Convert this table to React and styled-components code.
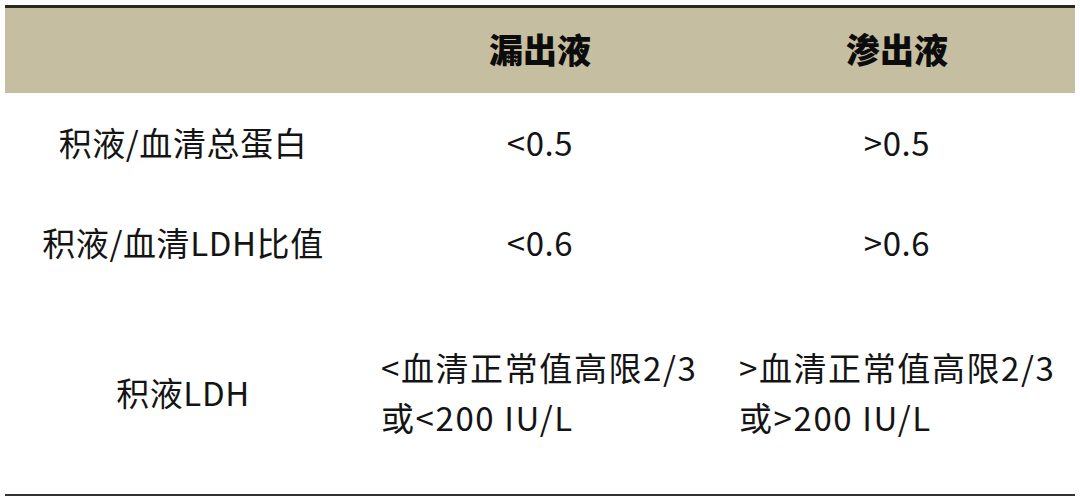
import React from 'react';
import styled, { createGlobalStyle } from 'styled-components';

const Global = createGlobalStyle`
  body {
    margin: 0;
    background: #ffffff;
    font-family: 'Noto Sans CJK SC', 'Noto Sans', sans-serif;
    color: #141414;
  }
`;

const Page = styled.div`
  padding: 5px 5px 0 5px;
`;

const Table = styled.div`
  display: grid;
  grid-template-columns: 356px 358px 356px;
  grid-template-rows: 85px 102px 98px 201px;
  border-top: 3px solid #2a2a1e;
  border-bottom: 2px solid #333333;
`;

const HeadCell = styled.div`
  background: #c6bea0;
  display: flex;
  align-items: center;
  justify-content: center;
  font-size: 34px;
  font-weight: 900;
  color: #0c0c0c;
  padding-bottom: 4px;
`;

const Cell = styled.div`
  display: flex;
  align-items: center;
  justify-content: ${p => (p.left ? 'flex-start' : 'center')};
  padding-left: ${p => (p.left ? '20px' : '0')};
  font-size: 33px;
  font-weight: 400;
  letter-spacing: ${p => (p.left ? '1.6px' : '0.6px')};
  line-height: 50px;
  padding-bottom: 4px;
`;

const Lines = styled.div`
  display: flex;
  flex-direction: column;
`;

const rows = [
  { label: '积液/血清总蛋白', a: ['<0.5'], b: ['>0.5'] },
  { label: '积液/血清LDH比值', a: ['<0.6'], b: ['>0.6'] },
  {
    label: '积液LDH',
    a: ['<血清正常值高限2/3', '或<200 IU/L'],
    b: ['>血清正常值高限2/3', '或>200 IU/L'],
    left: true,
  },
];

export default function App() {
  return (
    <Page>
      <Global />
      <Table>
        <HeadCell />
        <HeadCell>漏出液</HeadCell>
        <HeadCell>渗出液</HeadCell>
        {rows.map((r, i) => (
          <React.Fragment key={i}>
            <Cell>{r.label}</Cell>
            <Cell left={r.left}>
              <Lines>{r.a.map((t, j) => <span key={j}>{t}</span>)}</Lines>
            </Cell>
            <Cell left={r.left}>
              <Lines>{r.b.map((t, j) => <span key={j}>{t}</span>)}</Lines>
            </Cell>
          </React.Fragment>
        ))}
      </Table>
    </Page>
  );
}
